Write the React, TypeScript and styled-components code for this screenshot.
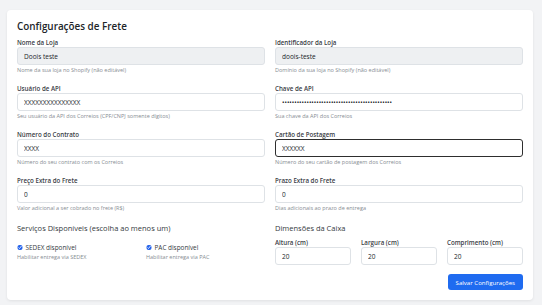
import React from "react"
import styled, { createGlobalStyle } from "styled-components"

const GlobalStyle = createGlobalStyle`
  html, body {
    margin: 0;
    padding: 0;
    background: #f2f3f5;
    font-family: "Open Sans", "Noto Sans", sans-serif;
    color: #2b2f33;
  }
  * {
    box-sizing: border-box;
  }
`

const Page = styled.div`
  padding: 10px 9px 4px 7px;
`

const Card = styled.form`
  background: #ffffff;
  border-radius: 4px;
  box-shadow: 0 1px 3px rgba(0, 0, 0, 0.08);
  padding: 8px 10px 10px 10px;
`

const Title = styled.h2`
  margin: 0 0 4px 0;
  font-size: 9.9px;
  line-height: 16px;
  font-weight: 600;
  color: #212529;
`

const Grid = styled.div`
  display: grid;
  grid-template-columns: 1fr 1fr;
  column-gap: 10px;
  row-gap: 10px;
`

const Field = styled.div`
  display: flex;
  flex-direction: column;
`

const Label = styled.label`
  font-size: 6.2px;
  line-height: 9px;
  font-weight: 600;
  color: #3a4046;
`

const Input = styled.input<{ $focused?: boolean }>`
  height: 18px;
  width: 100%;
  margin: 0;
  padding: 0 6px;
  font-family: inherit;
  font-size: 6.5px;
  color: #212529;
  background: ${p => (p.readOnly ? "#eef0f2" : "#ffffff")};
  border: ${p => (p.$focused ? "1.5px solid #2e2e2e" : "1px solid #dee2e6")};
  border-radius: 3px;
  outline: none;
`

const Help = styled.div`
  margin-top: 1px;
  font-size: 5.5px;
  line-height: 8px;
  color: #878d93;
`

const Section = styled.div`
  display: flex;
  flex-direction: column;
`

const SectionTitle = styled.h3`
  margin: 0;
  font-size: 7.5px;
  line-height: 12px;
  font-weight: 500;
  color: #343a40;
`

const Checks = styled.div`
  display: grid;
  grid-template-columns: 1fr 1fr;
  column-gap: 10px;
  margin-top: 9px;
`

const CheckLabel = styled.label`
  display: flex;
  align-items: center;
  gap: 3px;
  font-size: 6.4px;
  line-height: 9px;
  color: #343a40;
`

const CheckBox = styled.input`
  margin: 0;
  width: 5.5px;
  height: 5.5px;
  accent-color: #2563eb;
`

const Dimensions = styled.div`
  display: grid;
  grid-template-columns: repeat(3, 1fr);
  column-gap: 10px;
  margin-top: 4px;
`

const Actions = styled.div`
  display: flex;
  justify-content: flex-end;
  margin-top: 9px;
`

const SaveButton = styled.button`
  height: 16px;
  padding: 0 8px;
  border: none;
  border-radius: 3px;
  background: #1f6bf0;
  color: #ffffff;
  font-family: inherit;
  font-size: 6.1px;
  cursor: pointer;
`

type FieldProps = {
  label: string
  value: string
  help: string
  readOnly?: boolean
  focused?: boolean
  type?: string
}

const FormField = ({ label, value, help, readOnly, focused, type }: FieldProps) => (
  <Field>
    <Label>{label}</Label>
    <Input
      type={type || "text"}
      defaultValue={value}
      readOnly={readOnly}
      $focused={focused}
    />
    <Help>{help}</Help>
  </Field>
)

const App = () => {
  return (
    <Page>
      <GlobalStyle />
      <Card onSubmit={e => e.preventDefault()}>
        <Title>Configurações de Frete</Title>
        <Grid>
          <FormField
            label="Nome da Loja"
            value="Doois teste"
            help="Nome da sua loja no Shopify (não editável)"
            readOnly
          />
          <FormField
            label="Identificador da Loja"
            value="doois-teste"
            help="Domínio da sua loja no Shopify (não editável)"
            readOnly
          />
          <FormField
            label="Usuário de API"
            value="XXXXXXXXXXXXXXX"
            help="Seu usuário da API dos Correios (CPF/CNPJ somente dígitos)"
          />
          <FormField
            label="Chave de API"
            type="password"
            value="xxxxxxxxxxxxxxxxxxxxxxxxxxxxxxxxxxxxxxxxxxxxx"
            help="Sua chave da API dos Correios"
          />
          <FormField
            label="Número do Contrato"
            value="XXXX"
            help="Número do seu contrato com os Correios"
          />
          <FormField
            label="Cartão de Postagem"
            value="XXXXXX"
            help="Número do seu cartão de postagem dos Correios"
            focused
          />
          <FormField
            label="Preço Extra do Frete"
            value="0"
            help="Valor adicional a ser cobrado no frete (R$)"
          />
          <FormField
            label="Prazo Extra do Frete"
            value="0"
            help="Dias adicionais ao prazo de entrega"
          />
          <Section>
            <SectionTitle>Serviços Disponíveis (escolha ao menos um)</SectionTitle>
            <Checks>
              <Field>
                <CheckLabel>
                  <CheckBox type="checkbox" defaultChecked />
                  SEDEX disponível
                </CheckLabel>
                <Help>Habilitar entrega via SEDEX</Help>
              </Field>
              <Field>
                <CheckLabel>
                  <CheckBox type="checkbox" defaultChecked />
                  PAC disponível
                </CheckLabel>
                <Help>Habilitar entrega via PAC</Help>
              </Field>
            </Checks>
          </Section>
          <Section>
            <SectionTitle>Dimensões da Caixa</SectionTitle>
            <Dimensions>
              <Field>
                <Label>Altura (cm)</Label>
                <Input type="number" defaultValue="20" />
              </Field>
              <Field>
                <Label>Largura (cm)</Label>
                <Input type="number" defaultValue="20" />
              </Field>
              <Field>
                <Label>Comprimento (cm)</Label>
                <Input type="number" defaultValue="20" />
              </Field>
            </Dimensions>
            <Actions>
              <SaveButton type="submit">Salvar Configurações</SaveButton>
            </Actions>
          </Section>
        </Grid>
      </Card>
    </Page>
  )
}

export default App
